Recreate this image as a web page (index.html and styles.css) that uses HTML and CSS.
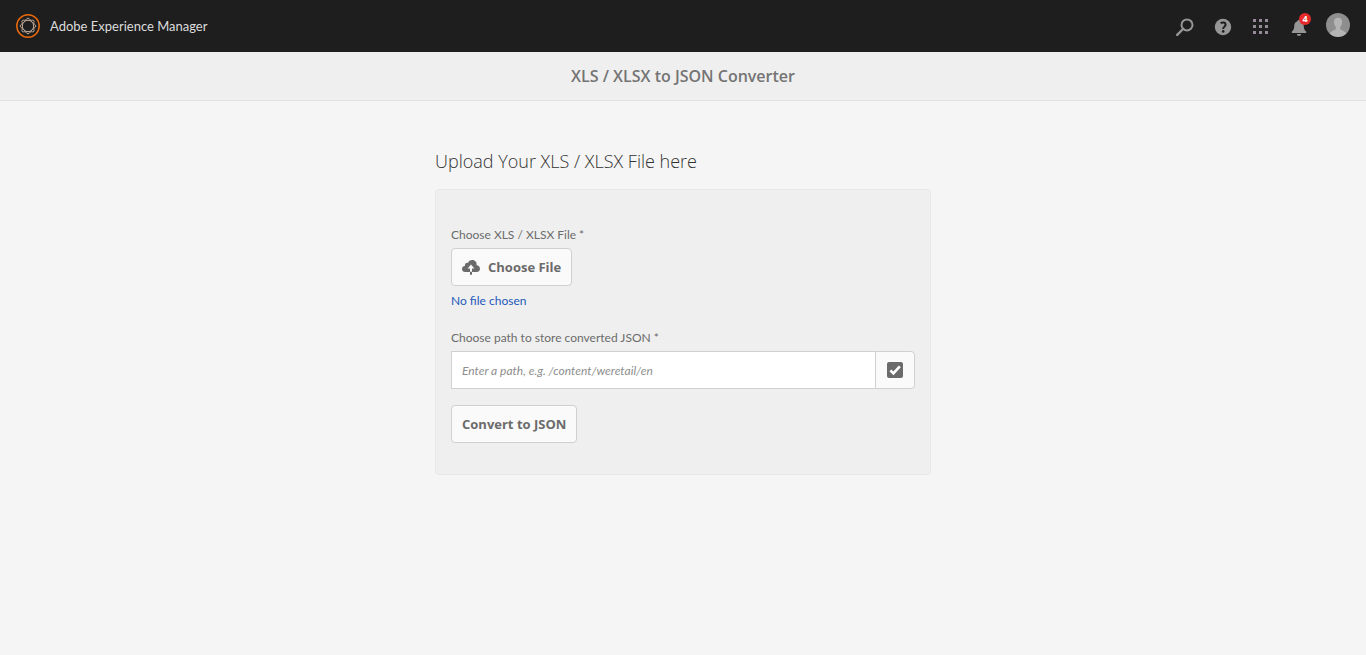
FILE: index.html
```html
<!DOCTYPE html>
<html lang="en">
<head>
<meta charset="utf-8">
<title>XLS / XLSX to JSON Converter</title>
<link rel="stylesheet" href="styles.css">
</head>
<body>
<header class="shell">
  <a class="brand" href="#">
    <svg class="brand-logo" viewBox="0 0 24 24" fill="none" aria-hidden="true">
      <circle cx="12" cy="12" r="11.2" stroke="#e8690b" stroke-width="1.5"/>
      <g stroke="#d9bfae" stroke-width="0.9">
        <circle cx="12" cy="12" r="5.7"/>
        <path d="M12 4.2C13.6 4.2 13.4 6 14.8 6.3 16 6.4 17 5.8 17.7 6.5S17.6 8.2 17.8 9.3C18.2 10.7 19.8 10.6 19.8 12S18.2 13.3 17.8 14.7C17.6 15.8 18.4 16.8 17.7 17.5S16 17.6 14.8 17.7C13.4 18 13.6 19.8 12 19.8S10.6 18 9.2 17.7C8 17.6 7 18.2 6.3 17.5S6.4 15.8 6.2 14.7C5.8 13.3 4.2 13.4 4.2 12S5.8 10.7 6.2 9.3C6.4 8.2 5.6 7.2 6.3 6.5S8 6.4 9.2 6.3C10.6 6 10.4 4.2 12 4.2Z"/>
      </g>
    </svg>
    <span>Adobe Experience Manager</span>
  </a>
  <nav class="tools" aria-label="Tools">
    <button class="tool" type="button" aria-label="Search">
      <svg viewBox="0 0 18 18" fill="none" stroke="#969696" aria-hidden="true"><circle cx="11" cy="6.9" r="5.5" stroke-width="2"/><path d="M7 11 1.2 16.8" stroke-width="2.4" stroke-linecap="round"/></svg>
    </button>
    <button class="tool" type="button" aria-label="Help">
      <svg viewBox="0 0 18 18" aria-hidden="true"><circle cx="9" cy="9" r="8.2" fill="#969696"/><path d="M6.6 5.1C8.6 3.9 11.6 4.3 11.6 6.6 11.6 8.6 9.2 8.7 9.2 11" fill="none" stroke="#1e1e1e" stroke-width="2"/><circle cx="9.2" cy="13.4" r="1.3" fill="#1e1e1e"/></svg>
    </button>
    <button class="tool" type="button" aria-label="Solutions">
      <svg viewBox="0 0 18 18" fill="#958a98" aria-hidden="true"><path d="M1 1h3v3H1zM7 1h3v3H7zM13 1h3v3h-3zM1 7h3v3H1zM7 7h3v3H7zM13 7h3v3h-3zM1 13h3v3H1zM7 13h3v3H7zM13 13h3v3h-3z"/></svg>
    </button>
    <button class="tool" type="button" aria-label="Notifications">
      <svg viewBox="0 0 18 18" fill="#969696" aria-hidden="true"><path d="M9 2C10 2 10.5 2.5 10.6 3.3 13 4 13.8 6 13.8 8.6 13.8 11.2 14.8 12.6 16.2 13.6V15H1.8V13.6C3.2 12.6 4.2 11.2 4.2 8.6 4.2 6 5 4 7.4 3.3 7.5 2.5 8 2 9 2ZM6.8 16h4.4C11 17.3 10.2 17.9 9 17.9S7 17.3 6.8 16Z"/></svg>
      <span class="badge">4</span>
    </button>
    <button class="avatar" type="button" aria-label="User">
      <svg viewBox="0 0 24 24" aria-hidden="true"><circle cx="12" cy="12" r="12" fill="#8e8e8e"/><path d="M12 4.8C14.8 4.8 16.2 6.6 16.1 9.3 16 11.4 15.2 12.9 14.2 14V16.3C16 17.6 18.8 17.8 20.3 20.6A12 12 0 0 1 3.7 20.6C5.2 17.8 8 17.6 9.8 16.3V14C8.8 12.9 8 11.4 7.9 9.3 7.8 6.6 9.2 4.8 12 4.8Z" fill="#b4b4b4"/></svg>
    </button>
  </nav>
</header>
<div class="titlebar"><h1>XLS / XLSX to JSON Converter</h1></div>
<main class="content">
  <h2>Upload Your XLS / XLSX File here</h2>
  <form class="panel">
    <label class="label" for="file">Choose XLS / XLSX File *</label>
    <label class="button upload">
      <input class="file" id="file" type="file" accept=".xls,.xlsx">
      <svg viewBox="0 0 18 18" fill="#6b6b6b" aria-hidden="true"><path d="M14.6 7.2C15.1 4.3 13.2 1.9 10.3 1.9 8 1.9 6.6 3.1 6 4.9 3.9 4.6 2.7 6 3 7.8 1.2 8.1 0 9.4 0 11 0 12.8 1.3 14 3.2 14H8V10.4H5.6L9 6.6 12.4 10.4H10V14H14.6C16.8 14 18 12.6 18 10.7 18 8.8 16.6 7.3 14.6 7.2ZM8 13.8H10V16.8H8Z"/></svg>
      <span>Choose File</span>
    </label>
    <p class="file-name">No file chosen</p>
    <label class="label" for="path">Choose path to store converted JSON *</label>
    <div class="path-field">
      <input class="path-input" id="path" type="text" placeholder="Enter a path, e.g. /content/weretail/en">
      <button class="button browse" type="button" aria-label="Select path">
        <svg viewBox="0 0 18 18" aria-hidden="true"><rect x="1" y="1" width="16" height="16" rx="2" fill="#6b6b6b"/><path d="M4.4 9.4 7.4 12.4 13.8 5.4" fill="none" stroke="#fff" stroke-width="2.6"/></svg>
      </button>
    </div>
    <button class="button" type="submit">Convert to JSON</button>
  </form>
</main>
</body>
</html>
```
FILE: styles.css
```css
* { box-sizing: border-box; }
body { margin: 0; background: #f5f5f5; color: #6b6b6b; font: 12px/20px Lato, "Open Sans", sans-serif; }
h1, h2, p { margin: 0; }
button, input { font: inherit; color: inherit; }
svg { display: block; width: 18px; height: 18px; flex: none; }
h1, h2, .button, .badge { font-family: "Open Sans", "Noto Sans", sans-serif; }
.shell { display: flex; align-items: center; justify-content: space-between; height: 52px; padding: 0 16px; background: #1e1e1e; }
.brand { display: flex; align-items: center; gap: 10px; color: #dcdcdc; font-size: 13px; text-decoration: none; }
.brand-logo { width: 24px; height: 24px; }
.tools { display: flex; align-items: center; gap: 20px; }
.tool, .avatar { position: relative; padding: 0; border: 0; background: none; cursor: pointer; }
.tool { padding-top: 2px; }
.avatar { margin-left: -2px; padding-bottom: 2px; }
.avatar svg { width: 24px; height: 24px; }
.badge { position: absolute; top: -3px; right: -3px; width: 12px; height: 12px; border-radius: 50%; background: #e62a2a; color: #fff; font-size: 9px; font-weight: 700; line-height: 12px; text-align: center; }
.titlebar { display: flex; align-items: center; justify-content: center; height: 49px; border-bottom: 1px solid #e0e0e0; background: #efefef; }
h1 { color: #747474; font-size: 16px; font-weight: 600; line-height: 24px; }
.content { width: 100%; max-width: 496px; margin: 0 auto; padding-top: 48px; }
h2 { margin-bottom: 16px; color: #323232; font-size: 18px; font-weight: 300; line-height: 24px; }
.panel { display: flex; flex-direction: column; align-items: flex-start; padding: 35px 15px 31px; border: 1px solid #e8e8e8; border-radius: 4px; background: #efefef; }
.label { margin-bottom: 3px; }
.button { display: inline-flex; align-items: center; justify-content: center; gap: 8px; height: 38px; padding: 0 10px; border: 1px solid #d0d0d0; border-radius: 4px; background: #fafafa; font-size: 13px; font-weight: 700; cursor: pointer; }
.upload { position: relative; }
.file { position: absolute; inset: 0; width: 100%; opacity: 0; cursor: pointer; }
.file-name { margin: 5px 0 17px; color: #2259ba; }
.path-field { display: flex; width: 100%; margin-bottom: 16px; }
.path-input { flex: 1; min-width: 0; height: 38px; padding: 0 10px; border: 1px solid #d0d0d0; border-right: 0; border-radius: 0; background: #fff; }
.path-input::placeholder { color: #8e8e8e; font-style: italic; opacity: 1; }
.browse { width: 40px; border-radius: 0 4px 4px 0; }
```
